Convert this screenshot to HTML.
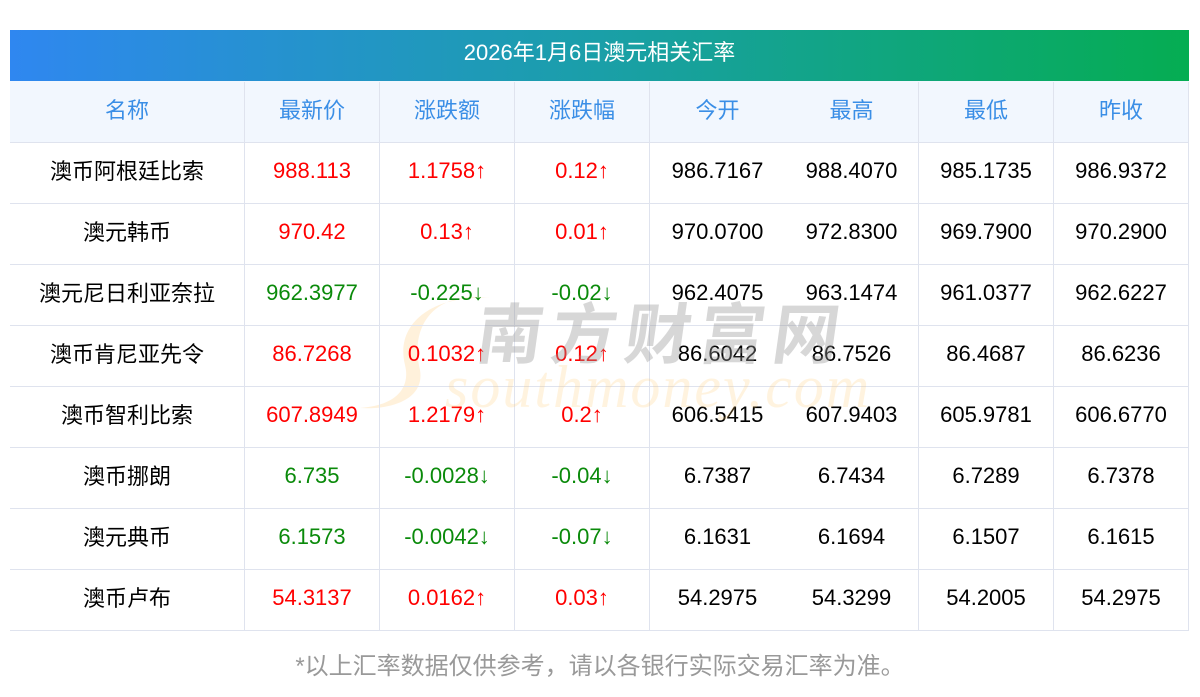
<!DOCTYPE html>
<html><head><meta charset="utf-8"><style>
body{margin:0;width:1200px;height:697px;background:#fff;font-family:"Liberation Sans","Noto Sans CJK SC",sans-serif;position:relative;overflow:hidden}
.bar{position:absolute;left:10px;top:30px;width:1179px;height:51px;background:linear-gradient(90deg,#2f87f0,#1a9fa8 50%,#05ad52);color:#fff;font-size:22px;text-align:center;line-height:46px}
.tb{position:absolute;left:10px;top:81px;width:1179px}
.row{display:flex;height:60px;border-bottom:1px solid #dfe3ee}
.row.h{background:#f2f7fe;color:#3a8ee6;height:60px;border-top:1px solid #f2f7fe}
.row div{height:60px;border-right:1px solid #dfe3ee;box-sizing:border-box;text-align:center;font-size:22px;line-height:56px;width:135px}
.row div:first-child{width:235px}
.row div.nb{border-right:none}
.row div:last-child{border-right:1px solid #dfe3ee;width:135px}
.row div.w{width:134px}
.c{position:relative;top:1px}
.h div span{position:relative;top:1px}
.r{color:#f00}.g{color:#0a8a0a}
.wm1{position:absolute;left:478px;top:282px;font-size:66px;color:rgba(150,150,150,.38);letter-spacing:8px;font-weight:bold;transform:skewX(-8deg);font-family:"Noto Sans CJK SC",sans-serif}
.wm2{position:absolute;left:445px;top:353px;font-size:60px;color:rgba(255,200,110,.22);font-style:italic;font-family:"Liberation Serif",serif;letter-spacing:2px}
.foot{position:absolute;top:646px;width:1200px;text-align:center;color:#999;font-size:24px}
</style></head><body>
<div class="bar">2026年1月6日澳元相关汇率</div>
<svg style="position:absolute;left:350px;top:290px" width="150" height="130"><path d="M140 8 C80 0 60 40 70 80 C75 110 40 120 10 118 C50 115 60 95 55 75 C45 35 80 5 140 8Z" fill="rgba(255,200,110,.25)"/></svg>
<div class="tb">
<div class="row h"><div><span>名称</span></div><div><span>最新价</span></div><div><span>涨跌额</span></div><div><span>涨跌幅</span></div><div class="nb"><span>今开</span></div><div class="w"><span>最高</span></div><div><span>最低</span></div><div><span>昨收</span></div></div>
<div class="row"><div><span class="c">澳币阿根廷比索</span></div><div class="r">988.113</div><div class="r">1.1758↑</div><div class="r">0.12↑</div><div class="nb">986.7167</div><div class="w">988.4070</div><div>985.1735</div><div>986.9372</div></div>
<div class="row"><div><span class="c">澳元韩币</span></div><div class="r">970.42</div><div class="r">0.13↑</div><div class="r">0.01↑</div><div class="nb">970.0700</div><div class="w">972.8300</div><div>969.7900</div><div>970.2900</div></div>
<div class="row"><div><span class="c">澳元尼日利亚奈拉</span></div><div class="g">962.3977</div><div class="g">-0.225↓</div><div class="g">-0.02↓</div><div class="nb">962.4075</div><div class="w">963.1474</div><div>961.0377</div><div>962.6227</div></div>
<div class="row"><div><span class="c">澳币肯尼亚先令</span></div><div class="r">86.7268</div><div class="r">0.1032↑</div><div class="r">0.12↑</div><div class="nb">86.6042</div><div class="w">86.7526</div><div>86.4687</div><div>86.6236</div></div>
<div class="row"><div><span class="c">澳币智利比索</span></div><div class="r">607.8949</div><div class="r">1.2179↑</div><div class="r">0.2↑</div><div class="nb">606.5415</div><div class="w">607.9403</div><div>605.9781</div><div>606.6770</div></div>
<div class="row"><div><span class="c">澳币挪朗</span></div><div class="g">6.735</div><div class="g">-0.0028↓</div><div class="g">-0.04↓</div><div class="nb">6.7387</div><div class="w">6.7434</div><div>6.7289</div><div>6.7378</div></div>
<div class="row"><div><span class="c">澳元典币</span></div><div class="g">6.1573</div><div class="g">-0.0042↓</div><div class="g">-0.07↓</div><div class="nb">6.1631</div><div class="w">6.1694</div><div>6.1507</div><div>6.1615</div></div>
<div class="row"><div><span class="c">澳币卢布</span></div><div class="r">54.3137</div><div class="r">0.0162↑</div><div class="r">0.03↑</div><div class="nb">54.2975</div><div class="w">54.3299</div><div>54.2005</div><div>54.2975</div></div>
</div>
<div class="wm1">南方财富网</div>
<div class="wm2">southmoney.com</div>
<div class="foot">*以上汇率数据仅供参考，请以各银行实际交易汇率为准。</div>
</body></html>
